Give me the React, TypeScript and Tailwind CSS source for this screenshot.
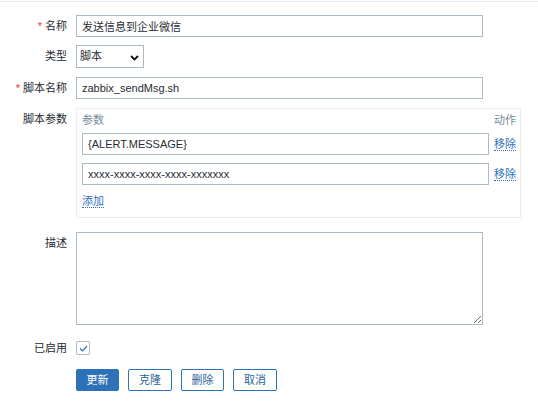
import React from "react";

const labelCls = "w-[67px] shrink-0 text-right text-[#1f2c33]";
const inputCls =
  "h-[22px] shrink-0 border border-[#acbbc2] bg-white px-[5px] text-[11px] text-[#1f2c33] outline-none";

function Label({ text, required }: { text: string; required?: boolean }) {
  return (
    <div className={labelCls + " h-[22px] leading-[22px]"}>
      {required && <span className="text-[#e33734]">* </span>}
      {text}
    </div>
  );
}

function LinkText({ children }: { children: React.ReactNode }) {
  return (
    <span className="whitespace-nowrap border-b border-dotted border-[#2d71be] leading-[14px] text-[#2d71be]">
      {children}
    </span>
  );
}

export default function App() {
  return (
    <div className="min-h-[403px] bg-white font-['Liberation_Sans','Noto_Sans_CJK_SC',sans-serif] text-[11px]">
      <div className="mt-px border-t border-[#ebeef0] pt-[13px]">
        {/* 名称 */}
        <div className="flex">
          <Label text="名称" required />
          <input className={inputCls + " ml-[9px] w-[407px]"} defaultValue="发送信息到企业微信" />
        </div>

        {/* 类型 */}
        <div className="mt-[8px] flex">
          <div className={labelCls + " h-[23px] leading-[23px]"}>类型</div>
          <div className="relative ml-[9px] h-[23px] w-[68px] border border-[#acbbc2] bg-white pl-[3px] leading-[21px] text-[#1f2c33]">
            脚本
            <svg
              className="absolute right-[4px] top-[9px]"
              width="9"
              height="6"
              viewBox="0 0 9 6"
              fill="none"
            >
              <path d="M1 1l3.5 3.5L8 1" stroke="#111" strokeWidth="1.8" />
            </svg>
          </div>
        </div>

        {/* 脚本名称 */}
        <div className="mt-[9px] flex">
          <Label text="脚本名称" required />
          <input className={inputCls + " ml-[9px] w-[407px]"} defaultValue="zabbix_sendMsg.sh" />
        </div>

        {/* 脚本参数 */}
        <div className="mt-[9px] flex">
          <Label text="脚本参数" />
          <div className="ml-[9px] h-[110px] w-[445px] border border-[#ebeef0] pl-[5px] pr-[4px] pt-[4px]">
            <div className="flex h-[14px] justify-between leading-[14px] text-[#768d99]">
              <span>参数</span>
              <span>动作</span>
            </div>
            <div className="mt-[6px] flex items-center">
              <input className={inputCls + " w-[407px]"} defaultValue="{ALERT.MESSAGE}" />
              <span className="ml-[5px]">
                <LinkText>移除</LinkText>
              </span>
            </div>
            <div className="mt-[8px] flex items-center">
              <input className={inputCls + " w-[407px] text-[10px]"} defaultValue="xxxx-xxxx-xxxx-xxxx-xxxxxxx" />
              <span className="ml-[5px]">
                <LinkText>移除</LinkText>
              </span>
            </div>
            <div className="mt-[9px] leading-[14px]">
              <LinkText>添加</LinkText>
            </div>
          </div>
        </div>

        {/* 描述 */}
        <div className="mt-[14px] flex">
          <Label text="描述" />
          <textarea className="ml-[9px] h-[93px] w-[407px] border border-[#acbbc2] bg-white px-[5px] text-[#1f2c33] outline-none" />
        </div>

        {/* 已启用 */}
        <div className="mt-[16px] flex items-center">
          <div className={labelCls + " leading-[14px]"}>已启用</div>
          <div className="ml-[9px] flex h-[14px] w-[14px] items-center justify-center rounded-[2px] border border-[#acbbc2] bg-white">
            <svg width="9" height="7" viewBox="0 0 9 7" fill="none">
              <path d="M1 3.5l2.5 2.5L8 1" stroke="#2d71be" strokeWidth="1.2" />
            </svg>
          </div>
        </div>

        {/* buttons */}
        <div className="ml-[76px] mt-[14px] flex gap-[9px]">
          <button className="h-[22px] w-[43px] rounded-[2px] bg-[#2d71b8] text-[11px] text-white">更新</button>
          <button className="h-[22px] w-[44px] rounded-[2px] border border-[#2d71b8] bg-white text-[11px] text-[#2a5f98]">克隆</button>
          <button className="h-[22px] w-[43px] rounded-[2px] border border-[#2d71b8] bg-white text-[11px] text-[#2a5f98]">删除</button>
          <button className="h-[22px] w-[44px] rounded-[2px] border border-[#2d71b8] bg-white text-[11px] text-[#2a5f98]">取消</button>
        </div>
      </div>
    </div>
  );
}
